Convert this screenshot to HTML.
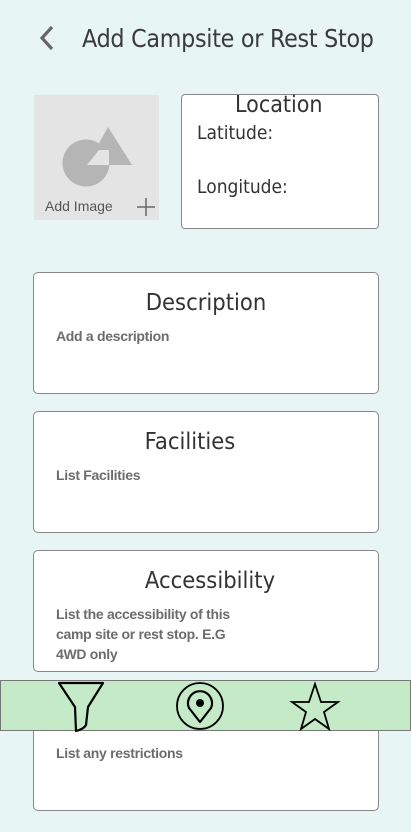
<!DOCTYPE html>
<html><head><meta charset="utf-8"><style>
*{margin:0;padding:0;box-sizing:border-box}
body{width:411px;height:832px;background:#e8f5f5;position:relative;overflow:hidden;font-family:"Liberation Sans",sans-serif}
.abs{position:absolute}
.title{left:82px;top:24px;font-size:25px;color:#3a3a3a;letter-spacing:-0.3px;font-family:"DejaVu Sans","Liberation Sans",sans-serif;transform:scaleX(0.89);transform-origin:left;white-space:nowrap}
.card{position:absolute;left:33px;width:346px;height:122px;background:#fff;border:1px solid #888;border-radius:5px}
.card h2{position:absolute;left:0;right:0;top:17px;text-align:center;font-weight:normal;font-size:23px;color:#333;font-family:"DejaVu Sans","Liberation Sans",sans-serif;transform:scaleX(0.92)}
.card p{position:absolute;left:22px;top:53px;font-size:14px;font-weight:bold;color:#6c6c6c;line-height:20px;letter-spacing:-0.3px}
.loc{left:181px;top:94px;width:198px;height:135px;background:#fff;border:1px solid #888;border-radius:4px}
.loc div{position:absolute;font-size:19px;color:#333;font-family:"DejaVu Sans","Liberation Sans",sans-serif;transform:scaleX(0.9);transform-origin:left}
</style></head><body>
<svg class="abs" style="left:36px;top:25px" width="22" height="26" viewBox="0 0 22 26"><path d="M16 2 L6 13 L16 24" fill="none" stroke="#666" stroke-width="3.2"/></svg>
<div class="abs title">Add Campsite or Rest Stop</div>

<div class="abs" style="left:34px;top:95px;width:125px;height:125px;background:#e4e4e4">
<svg class="abs" style="left:0;top:0" width="125" height="125"><circle cx="52" cy="68" r="23.5" fill="#b5b5b5"/><polygon points="74,32 98,70 53,70" fill="#b5b5b5"/><polygon points="65,55 75,55 75,70 53,70" fill="#e4e4e4"/></svg>
<div class="abs" style="left:11px;top:103px;font-size:14px;color:#555">Add Image</div>
<svg class="abs" style="left:102px;top:102px" width="20" height="20"><path d="M10 1V19M1 10H19" stroke="#666" stroke-width="1.5"/></svg>
</div>

<div class="abs loc">
<div style="left:53px;top:-3px;font-size:23px">Location</div>
<div style="left:15px;top:27px">Latitude:</div>
<div style="left:15px;top:81px">Longitude:</div>
</div>

<div class="card" style="top:272px"><h2>Description</h2><p>Add a description</p></div>
<div class="card" style="top:411px"><h2 style="left:-32px">Facilities</h2><p>List Facilities</p></div>
<div class="card" style="top:550px"><h2 style="left:8px">Accessibility</h2><p>List the accessibility of this<br>camp site or rest stop. E.G<br>4WD only</p></div>
<div class="card" style="top:689px"><h2>Restrictions</h2><p style="top:53px">List any restrictions</p></div>

<div class="abs" style="left:0;top:680px;width:411px;height:51px;background:#c5eac7;border:1px solid #777">
<svg class="abs" style="left:0;top:0" width="411" height="51">
<path d="M58 2 H102 L87 26 L85 44 Q83 48 75 50 L74 26 Z" fill="none" stroke="#000" stroke-width="2.2" stroke-linejoin="round"/>
<circle cx="199" cy="25" r="23" fill="none" stroke="#000" stroke-width="1.8"/>
<path d="M199 41 L188 27 A12 12 0 1 1 210 27 Z" fill="none" stroke="#000" stroke-width="2.2" stroke-linejoin="round"/>
<circle cx="199" cy="22" r="4" fill="#000"/>
<polygon points="314,3 320,21 337,21 323,31 328,48 314,38 300,48 305,31 291,21 308,21" fill="none" stroke="#000" stroke-width="1.8" stroke-linejoin="miter"/>
</svg>
</div>
</body></html>
